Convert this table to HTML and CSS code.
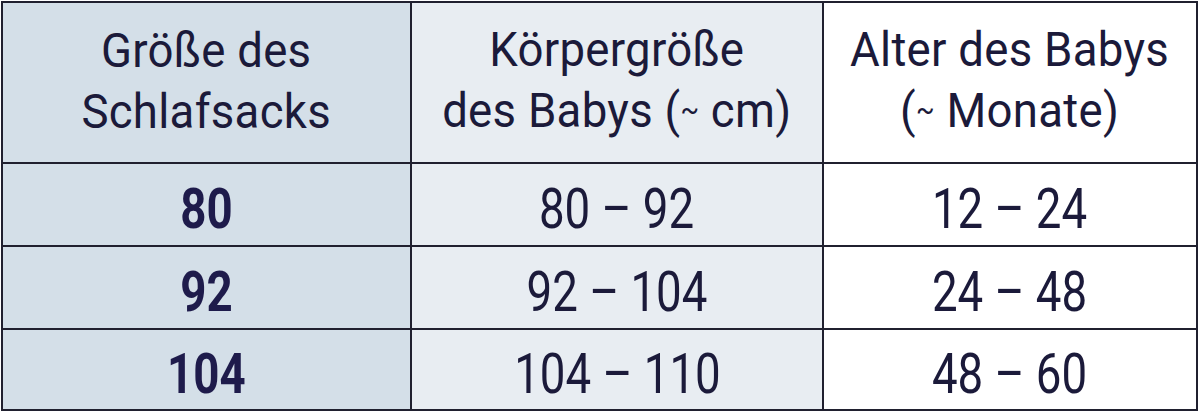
FILE: index.html
```html
<!DOCTYPE html>
<html lang="de">
<head>
<meta charset="utf-8">
<title>Größentabelle Schlafsack</title>
<link rel="stylesheet" href="styles.css">
</head>
<body>
<div class="size-table">
  <div class="cell head c1"><span class="label">Größe des<br>Schlafsacks</span></div>
  <div class="cell head c2"><span class="label">Körpergröße<br>des Babys (<span class="tilde">~</span> cm)</span></div>
  <div class="cell head c3"><span class="label">Alter des Babys<br>(<span class="tilde">~</span> Monate)</span></div>

  <div class="cell body c1 strong"><span class="num">80</span></div>
  <div class="cell body c2"><span class="num">80 – 92</span></div>
  <div class="cell body c3"><span class="num">12 – 24</span></div>

  <div class="cell body c1 strong"><span class="num">92</span></div>
  <div class="cell body c2"><span class="num">92 – 104</span></div>
  <div class="cell body c3"><span class="num">24 – 48</span></div>

  <div class="cell body c1 strong"><span class="num">104</span></div>
  <div class="cell body c2"><span class="num">104 – 110</span></div>
  <div class="cell body c3"><span class="num">48 – 60</span></div>
</div>
</body>
</html>
```
FILE: styles.css
```css
html, body {
  margin: 0;
  padding: 0;
  background: #ffffff;
}

body {
  font-family: Roboto, "Noto Sans", sans-serif;
  color: #1b1a3a;
}

.size-table {
  margin: 1px 0 0 1px;
  width: 1197px;
  box-sizing: border-box;
  display: grid;
  grid-template-columns: 407px 410px 372px;
  grid-template-rows: 159px 81px 81px 79px;
  gap: 2px;
  padding: 2px;
  background: #20202f;
}

.cell {
  display: flex;
  align-items: center;
  justify-content: center;
  text-align: center;
}

.c1 { background: #d4dfe8; }
.c2 { background: #e8edf2; }
.c3 { background: #ffffff; }

.head {
  font-size: 49px;
  line-height: 61px;
  letter-spacing: 0.3px;
  padding-bottom: 4px;
}

.label {
  display: inline-block;
  transform: scaleX(0.93);
  white-space: nowrap;
}

.tilde {
  font-size: 0.6em;
  vertical-align: 0.25em;
}

.body {
  font-size: 55px;
  padding-top: 8px;
}

.num {
  display: inline-block;
  transform: scaleX(0.83);
  white-space: nowrap;
}

.strong {
  font-weight: 700;
  color: #1e1b4b;
}
```
